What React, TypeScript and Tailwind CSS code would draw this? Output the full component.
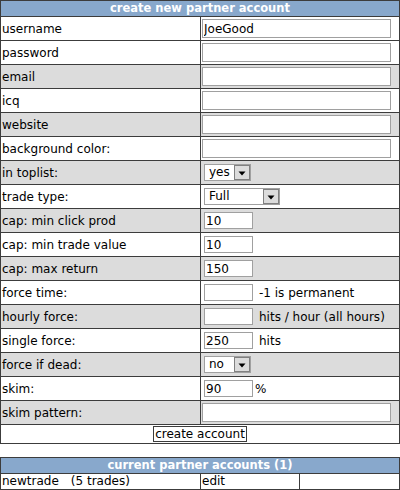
import React from "react";

const font = "font-['DejaVu_Sans',Verdana,sans-serif]";

function WideInput({ value = "" }: { value?: string }) {
  return (
    <input
      readOnly
      value={value}
      className="ml-[1px] w-[189px] h-[19px] border border-[#a0a0a0] bg-white px-[1px] text-[12px] leading-[17px] text-black outline-none"
    />
  );
}

function SmallInput({ value = "" }: { value?: string }) {
  return (
    <input
      readOnly
      value={value}
      className="ml-[3px] w-[49px] h-[17px] border border-[#a0a0a0] bg-white px-[1px] text-[12px] leading-[15px] text-black outline-none"
    />
  );
}

function Select({ value, width }: { value: string; width: string }) {
  return (
    <div className={`ml-[3px] ${width} h-[17px] border border-[#a0a0a0] bg-white flex items-stretch`}>
      <div className="flex-1 pl-[4px] text-[12px] leading-[15px] text-black">{value}</div>
      <div className="w-[16px] border border-[#808080] bg-[#dcdcdc] flex items-center justify-center">
        <svg width="8" height="5" viewBox="0 0 8 5" className="mt-[2px]">
          <path d="M0.5 0.5 H7.5 L4 4.5 Z" fill="#000" />
        </svg>
      </div>
    </div>
  );
}

function Row({
  label,
  gray,
  children,
}: {
  label: string;
  gray?: boolean;
  children?: React.ReactNode;
}) {
  return (
    <div className={`flex h-[24px] border-t border-[#3c3c3c] ${gray ? "bg-[#dcdcdc]" : "bg-white"}`}>
      <div className="w-[199px] pl-[1px] flex items-center text-[12px] text-black">{label}</div>
      <div className="flex-1 border-l border-[#3c3c3c] flex items-center text-[12px] text-black">
        {children}
      </div>
    </div>
  );
}

export default function App() {
  return (
    <div className={`w-[400px] h-[490px] bg-white ${font}`}>
      <div className="border border-[#3c3c3c]">
        <div className="h-[15px] bg-[#88a8cc] text-white font-bold text-[11.5px] leading-[15px] text-center">
          create new partner account
        </div>
        <Row label="username"><WideInput value="JoeGood" /></Row>
        <Row label="password"><WideInput /></Row>
        <Row label="email" gray><WideInput /></Row>
        <Row label="icq"><WideInput /></Row>
        <Row label="website" gray><WideInput /></Row>
        <Row label="background color:"><WideInput /></Row>
        <Row label="in toplist:" gray><Select value="yes" width="w-[47px]" /></Row>
        <Row label="trade type:"><Select value="Full" width="w-[76px]" /></Row>
        <Row label="cap: min click prod" gray><SmallInput value="10" /></Row>
        <Row label="cap: min trade value"><SmallInput value="10" /></Row>
        <Row label="cap: max return" gray><SmallInput value="150" /></Row>
        <Row label="force time:">
          <SmallInput />
          <span className="ml-[6px]">-1 is permanent</span>
        </Row>
        <Row label="hourly force:" gray>
          <SmallInput />
          <span className="ml-[6px]">hits / hour (all hours)</span>
        </Row>
        <Row label="single force:">
          <SmallInput value="250" />
          <span className="ml-[6px]">hits</span>
        </Row>
        <Row label="force if dead:" gray><Select value="no" width="w-[47px]" /></Row>
        <Row label="skim:">
          <SmallInput value="90" />
          <span className="ml-[2px]">%</span>
        </Row>
        <Row label="skim pattern:" gray><WideInput /></Row>
        <div className="h-[19px] border-t border-[#3c3c3c] flex items-center justify-center">
          <button className="h-[16px] px-[1px] border border-[#3c3c3c] bg-white text-[12px] leading-[14px] text-black">
            create account
          </button>
        </div>
      </div>

      <div className="mt-[13px] border border-[#3c3c3c]">
        <div className="h-[15px] bg-[#88a8cc] text-white font-bold text-[11.5px] leading-[15px] text-center">
          current partner accounts (1)
        </div>
        <div className="flex h-[16px] border-t border-[#3c3c3c] text-[12px] leading-[15px] text-black">
          <div className="w-[199px] pl-[1px]">
            newtrade<span className="ml-[12px]">(5 trades)</span>
          </div>
          <div className="w-[99px] border-l border-[#3c3c3c] pl-[1px]">edit</div>
          <div className="flex-1 border-l border-[#3c3c3c]"></div>
        </div>
      </div>
    </div>
  );
}
